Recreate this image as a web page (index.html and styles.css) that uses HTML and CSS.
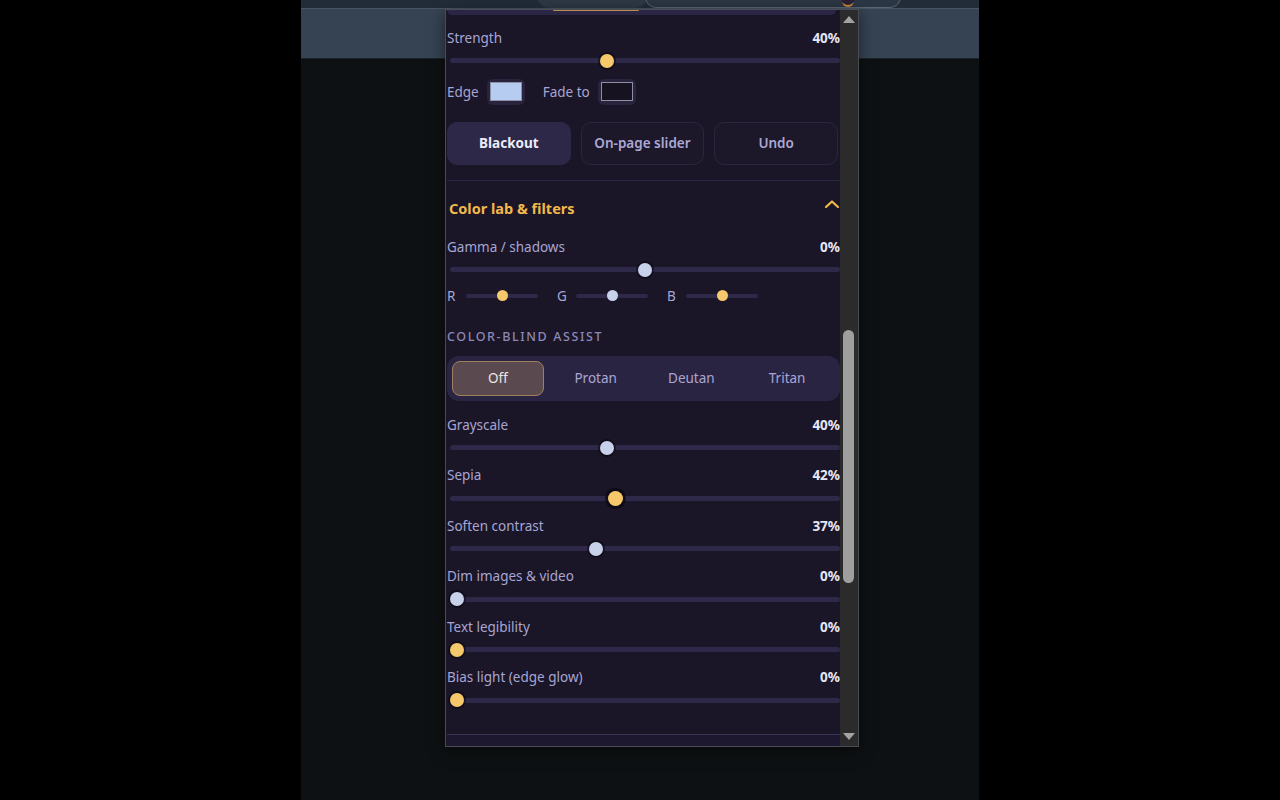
FILE: index.html
```html
<!DOCTYPE html>
<html lang="en">
<head>
    <meta charset="UTF-8">
    <meta name="viewport" content="width=device-width, initial-scale=1.0">
    <title>Screen Comfort</title>
    <link rel="stylesheet" href="styles.css">
</head>
<body>
    <div class="frame">
        <div class="tabstrip">
            <div class="tab-shape"></div>
            <div class="omnibox"><span class="ext-dot"></span></div>
        </div>
        <div class="toolbar"></div>

        <div class="popup">
            <div class="panel">
                <div class="mode-tail"><span class="mode-mark"></span></div>

                <div class="field">
                    <div class="field-head"><span>Strength</span><b>40%</b></div>
                    <input type="range" class="range warm" min="0" max="100" value="40">
                </div>

                <div class="swatch-row">
                    <span>Edge</span>
                    <span class="swatch"><i class="chip edge"></i></span>
                    <span class="fade-label">Fade to</span>
                    <span class="swatch"><i class="chip fade"></i></span>
                </div>

                <div class="actions">
                    <button class="btn primary">Blackout</button>
                    <button class="btn">On-page slider</button>
                    <button class="btn">Undo</button>
                </div>

                <div class="section-head">
                    <span>Color lab &amp; filters</span>
                    <svg class="chevron" width="16" height="10" viewBox="0 0 16 10"><path d="M2 8 L8 2.5 L14 8" fill="none" stroke="#f2b84b" stroke-width="2.2" stroke-linecap="round" stroke-linejoin="round"/></svg>
                </div>

                <div class="field">
                    <div class="field-head"><span>Gamma / shadows</span><b>0%</b></div>
                    <input type="range" class="range cool" min="-50" max="50" value="0">
                </div>

                <div class="rgb-row">
                    <label>R</label><input type="range" class="mini warm" value="50">
                    <label>G</label><input type="range" class="mini cool" value="50">
                    <label>B</label><input type="range" class="mini warm" value="50">
                </div>

                <div class="caption">Color-blind assist</div>
                <div class="segmented">
                    <button class="seg active">Off</button>
                    <button class="seg">Protan</button>
                    <button class="seg">Deutan</button>
                    <button class="seg">Tritan</button>
                </div>

                <div class="filters">
                    <div class="field">
                        <div class="field-head"><span>Grayscale</span><b>40%</b></div>
                        <input type="range" class="range cool" min="0" max="100" value="40">
                    </div>
                    <div class="field">
                        <div class="field-head"><span>Sepia</span><b>42%</b></div>
                        <input type="range" class="range warm glow" min="0" max="100" value="42">
                    </div>
                    <div class="field">
                        <div class="field-head"><span>Soften contrast</span><b>37%</b></div>
                        <input type="range" class="range cool" min="0" max="100" value="37">
                    </div>
                    <div class="field">
                        <div class="field-head"><span>Dim images &amp; video</span><b>0%</b></div>
                        <input type="range" class="range cool" min="0" max="100" value="0">
                    </div>
                    <div class="field">
                        <div class="field-head"><span>Text legibility</span><b>0%</b></div>
                        <input type="range" class="range warm" min="0" max="100" value="0">
                    </div>
                    <div class="field">
                        <div class="field-head"><span>Bias light (edge glow)</span><b>0%</b></div>
                        <input type="range" class="range warm" min="0" max="100" value="0">
                    </div>
                </div>

                <div class="panel-foot"></div>
            </div>

            <div class="scrollbar">
                <span class="arrow up"></span>
                <span class="thumb"></span>
                <span class="arrow down"></span>
            </div>
        </div>
    </div>
</body>
</html>
```

FILE: styles.css
```css
* {
    margin: 0;
    padding: 0;
    box-sizing: border-box;
}

body {
    background: #000;
    font-family: 'Noto Sans', 'Segoe UI', sans-serif;
    font-size: 13.5px;
}

.frame {
    position: relative;
    width: 678px;
    height: 800px;
    margin: 0 auto;
    background: #0e1113;
    overflow: hidden;
}

/* browser chrome behind the popup */
.tabstrip {
    position: relative;
    height: 9px;
    background: #222c39;
    border-bottom: 1px solid #4a5564;
}

.tab-shape {
    position: absolute;
    left: 236px;
    top: -6px;
    width: 110px;
    height: 14px;
    background: #2d3846;
    border-radius: 0 0 12px 12px;
}

.omnibox {
    position: absolute;
    left: 344px;
    top: -14px;
    width: 256px;
    height: 22px;
    border: 1px solid #5b6572;
    border-radius: 12px;
    background: #2b3644;
}

.ext-dot {
    position: absolute;
    right: 46px;
    top: 8px;
    width: 12px;
    height: 12px;
    border-radius: 50%;
    background: #2a2036;
    box-shadow: inset 0 -3px 0 -1px #c98a3a;
}

.toolbar {
    height: 50px;
    background: #364352;
    border-bottom: 1px solid #1c232b;
}

/* extension popup */
.popup {
    position: absolute;
    left: 144px;
    top: 9px;
    width: 414px;
    height: 738px;
    display: flex;
    background: #1a1527;
    border: 1px solid #4a4c55;
    box-shadow: 0 4px 14px rgba(0, 0, 0, 0.5);
}

.panel {
    flex: 1;
    display: flex;
    flex-direction: column;
    padding-left: 1px;
    overflow: hidden;
}

.mode-tail {
    position: relative;
    height: 5px;
    margin-right: 4px;
    background: #2c2646;
    border-radius: 0 0 8px 8px;
}

.mode-mark {
    position: absolute;
    left: 106px;
    top: -1px;
    width: 86px;
    height: 2px;
    background: #b98d4e;
    border-radius: 1px;
}

.field {
    display: flex;
    flex-direction: column;
    gap: 6px;
}

.mode-tail + .field {
    margin-top: 13px;
}

.field-head {
    display: flex;
    justify-content: space-between;
    align-items: center;
    height: 20px;
    color: #a8a5d2;
}

.field-head b {
    color: #e6e6f6;
    font-weight: 700;
}

/* sliders */
.range,
.mini {
    -webkit-appearance: none;
    appearance: none;
    background: transparent;
    display: block;
}

.range {
    width: calc(100% - 3px);
    height: 14px;
    margin-left: 3px;
}

.range::-webkit-slider-runnable-track {
    height: 5px;
    background: #2e2949;
    border-radius: 3px;
}

.range::-webkit-slider-thumb {
    -webkit-appearance: none;
    width: 14px;
    height: 14px;
    margin-top: -4.5px;
    border-radius: 50%;
    box-shadow: 0 0 0 2px rgba(10, 8, 16, 0.55);
}

.mini {
    width: 72px;
    height: 11px;
}

.mini::-webkit-slider-runnable-track {
    height: 4px;
    background: #2e2949;
    border-radius: 2px;
}

.mini::-webkit-slider-thumb {
    -webkit-appearance: none;
    width: 11px;
    height: 11px;
    margin-top: -3.5px;
    border-radius: 50%;
}

.warm::-webkit-slider-thumb {
    background: #f6c86c;
}

.cool::-webkit-slider-thumb {
    background: #c8d1ea;
}

.glow::-webkit-slider-thumb {
    width: 15px;
    height: 15px;
    margin-top: -5px;
    box-shadow: 0 0 0 3px rgba(8, 6, 14, 0.7);
}

.swatch-row {
    display: flex;
    align-items: center;
    height: 26px;
    margin-top: 11px;
    color: #a8a5d2;
}

.swatch {
    display: flex;
    align-items: center;
    justify-content: center;
    width: 38px;
    height: 26px;
    margin-left: 8px;
    background: #29233e;
    border-radius: 6px;
}

.fade-label {
    margin-left: 18px;
}

.chip {
    display: block;
    width: 32px;
    height: 19px;
    border: 1px solid #8c8fa6;
}

.chip.edge {
    background: #b6cdf1;
}

.chip.fade {
    background: #16121f;
}

.actions {
    display: grid;
    grid-template-columns: repeat(3, 1fr);
    gap: 10px;
    width: 391px;
    margin: 17px 0 0 0;
}

.btn {
    height: 43px;
    font-family: inherit;
    font-size: 13.5px;
    font-weight: 600;
    color: #aca8d6;
    background: #1c1729;
    border: 1px solid #2b2640;
    border-radius: 10px;
}

.btn.primary {
    color: #ecebf8;
    font-weight: 700;
    background: #2e2848;
    border-color: #2e2848;
}

.section-head {
    display: flex;
    justify-content: space-between;
    align-items: center;
    height: 41px;
    margin-top: 15px;
    padding: 14px 0 0 2px;
    border-top: 1px solid #2a2540;
    color: #f2b84b;
    font-size: 14.5px;
    font-weight: 700;
}

.chevron {
    margin-right: 0;
    margin-top: -8px;
}

.section-head + .field {
    margin-top: 16px;
}

.rgb-row {
    display: flex;
    align-items: center;
    height: 14px;
    margin-top: 12px;
    color: #a8a5d2;
}

.rgb-row label {
    width: 19px;
}

.rgb-row .mini {
    margin-right: 19px;
}

.caption {
    margin-top: 26px;
    height: 16px;
    line-height: 16px;
    color: #8d89b6;
    font-size: 12.5px;
    font-weight: 500;
    text-transform: uppercase;
    letter-spacing: 1.6px;
}

.segmented {
    display: grid;
    grid-template-columns: repeat(4, 1fr);
    height: 45px;
    margin-top: 11px;
    padding: 5px;
    background: #2a2443;
    border-radius: 12px;
}

.seg {
    font-family: inherit;
    font-size: 13.5px;
    color: #aaa6d4;
    background: transparent;
    border: 1px solid transparent;
    border-radius: 8px;
}

.seg.active {
    color: #efe6e2;
    background: #5a4a4f;
    border-color: #a07f5d;
    margin-right: 4px;
}

.filters {
    display: flex;
    flex-direction: column;
    gap: 10.5px;
    margin-top: 14px;
}

.panel-foot {
    margin-top: 27px;
    height: 12px;
    border-top: 1px solid #3a3552;
    background: #1d1830;
}

/* scrollbar column */
.scrollbar {
    position: relative;
    width: 18px;
    background: #2b2b2b;
}

.arrow {
    position: absolute;
    left: 3px;
    width: 0;
    height: 0;
    border-left: 6px solid transparent;
    border-right: 6px solid transparent;
}

.arrow.up {
    top: 6px;
    border-bottom: 7px solid #a3a3a3;
}

.arrow.down {
    bottom: 6px;
    border-top: 7px solid #a3a3a3;
}

.thumb {
    position: absolute;
    left: 3px;
    top: 320px;
    width: 11px;
    height: 253px;
    background: #9f9f9f;
    border-radius: 6px;
}
```
